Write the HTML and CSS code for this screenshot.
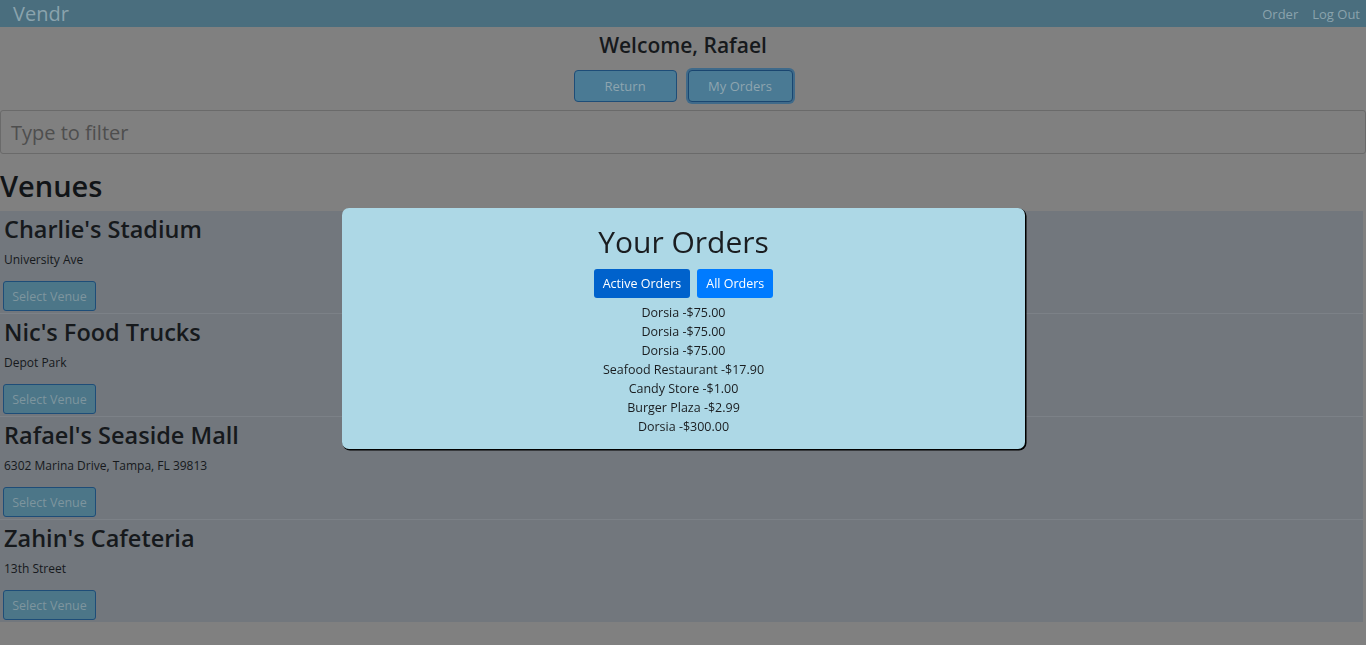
FILE: index.html
```html
<!DOCTYPE html>
<html lang="en">
<head>
<meta charset="utf-8">
<title>Vendr</title>
<link rel="stylesheet" href="styles.css">
</head>
<body>
<nav class="navbar">
  <span class="brand">Vendr</span>
  <div class="nav-links">
    <a class="nav-link">Order</a>
    <a class="nav-link">Log Out</a>
  </div>
</nav>
<main class="page">
  <h4 class="welcome">Welcome, Rafael</h4>
  <div class="top-actions">
    <button class="btn-outline">Return</button>
    <button class="btn-outline focused">My Orders</button>
  </div>
  <div class="filter">Type to filter</div>
  <h2 class="venues-title">Venues</h2>
  <section class="venue-list">
    <div class="venue">
      <h3 class="venue-name">Charlie's Stadium</h3>
      <p class="venue-addr">University Ave</p>
      <button class="btn-select">Select Venue</button>
    </div>
    <div class="venue">
      <h3 class="venue-name">Nic's Food Trucks</h3>
      <p class="venue-addr">Depot Park</p>
      <button class="btn-select">Select Venue</button>
    </div>
    <div class="venue">
      <h3 class="venue-name">Rafael's Seaside Mall</h3>
      <p class="venue-addr">6302 Marina Drive, Tampa, FL 39813</p>
      <button class="btn-select">Select Venue</button>
    </div>
    <div class="venue">
      <h3 class="venue-name">Zahin's Cafeteria</h3>
      <p class="venue-addr">13th Street</p>
      <button class="btn-select">Select Venue</button>
    </div>
  </section>
</main>
<div class="modal">
  <h2 class="modal-title">Your Orders</h2>
  <div class="modal-actions">
    <button class="btn-primary active">Active Orders</button>
    <button class="btn-primary">All Orders</button>
  </div>
  <ul class="orders">
    <li>Dorsia -$75.00</li>
    <li>Dorsia -$75.00</li>
    <li>Dorsia -$75.00</li>
    <li>Seafood Restaurant -$17.90</li>
    <li>Candy Store -$1.00</li>
    <li>Burger Plaza -$2.99</li>
    <li>Dorsia -$300.00</li>
  </ul>
</div>
</body>
</html>
```
FILE: styles.css
```css
* { box-sizing: border-box; }
html, body { margin: 0; padding: 0; }
body {
  background: #808080;
  font-family: "Open Sans", "Noto Sans", sans-serif;
  color: #111417;
  height: 645px;
  overflow: hidden;
}
.navbar {
  height: 27px;
  background: #4a6e7e;
  display: flex;
  align-items: center;
  justify-content: space-between;
  padding: 0 6px 0 13px;
}
.brand {
  font-size: 20px;
  color: #8aa3ad;
  line-height: 27px;
}
.nav-links { display: flex; gap: 14px; }
.nav-link { font-size: 13px; color: #8aa3ad; }
.page { display: flex; flex-direction: column; }
.welcome {
  margin: 4px 0 0;
  text-align: center;
  font-size: 21px;
  font-weight: 600;
  line-height: 28px;
  color: #16191c;
}
.top-actions {
  display: flex;
  justify-content: center;
  gap: 11px;
  margin-top: 11px;
}
.btn-outline {
  width: 103px;
  height: 32px;
  background: #4a7a94;
  border: 1px solid #1e4d78;
  border-radius: 4px;
  color: #8ea5af;
  font-family: inherit;
  font-size: 13px;
  padding: 0;
}
.btn-outline.focused {
  width: 105px;
  box-shadow: 0 0 0 2px #3f6a8a;
  border-color: #1a4670;
}
.filter {
  margin-top: 8px;
  height: 44px;
  border: 1px solid #6a6a6a;
  border-radius: 3px;
  padding: 0 10px;
  display: flex;
  align-items: center;
  font-size: 20px;
  color: #4e4e4e;
}
.venues-title {
  margin: 12px 0 0;
  font-size: 29px;
  font-weight: 600;
  line-height: 40px;
  color: #111417;
}
.venue-list {
  margin-top: 5px;
  width: 1363px;
  display: flex;
  flex-direction: column;
}
.venue {
  background: #72777d;
  height: 103px;
  padding: 2px 3px 0;
  border-bottom: 1px solid #7c8187;
  display: flex;
  flex-direction: column;
  align-items: flex-start;
}
.venue:last-child { border-bottom: none; height: 102px; }
.venue-name {
  margin: 0;
  font-size: 23.5px;
  font-weight: 600;
  line-height: 33px;
  color: #16191c;
  padding-left: 1px;
}
.venue-addr {
  margin: 5px 0 0;
  font-size: 12px;
  line-height: 18px;
  color: #16191c;
  padding-left: 1px;
}
.btn-select {
  margin-top: 12px;
  width: 93px;
  height: 30px;
  background: #4c7688;
  border: 1px solid #1e4d78;
  border-radius: 3px;
  color: #7e959e;
  font-family: inherit;
  font-size: 12.5px;
  padding: 0;
}
.modal {
  position: fixed;
  left: 342px;
  top: 208px;
  width: 683px;
  height: 241px;
  background: #add8e6;
  border-radius: 7px;
  box-shadow: 1px 1px 0 0.5px #000;
  display: flex;
  flex-direction: column;
  align-items: center;
}
.modal-title {
  margin: 14px 0 0;
  font-size: 30px;
  font-weight: 500;
  line-height: 40px;
  color: #1a1d20;
}
.modal-actions {
  display: flex;
  gap: 7px;
  margin-top: 7px;
}
.btn-primary {
  height: 29px;
  padding: 0 9px;
  background: #007bff;
  border: none;
  border-radius: 3px;
  color: #fff;
  font-family: inherit;
  font-size: 12.5px;
}
.btn-primary.active { background: #0062cc; }
.orders {
  list-style: none;
  margin: 5px 0 0;
  padding: 0;
  text-align: center;
  font-size: 12.5px;
  line-height: 19px;
  color: #1a1d20;
}
```
